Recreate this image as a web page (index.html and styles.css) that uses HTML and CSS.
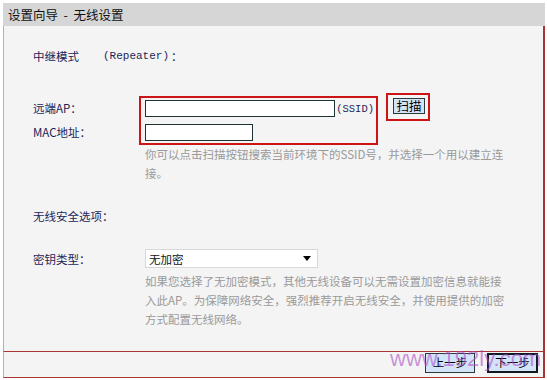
FILE: index.html
```html
<!DOCTYPE html>
<html lang="zh-CN">
<head>
<meta charset="utf-8">
<title>设置向导 - 无线设置</title>
<link rel="stylesheet" href="styles.css">
</head>
<body>
<div class="page">
  <div class="title">设置向导&nbsp;&nbsp;-&nbsp;&nbsp;无线设置</div>
  <div class="content">
    <div class="mode-row">
      <span class="mode-label">中继模式</span><span class="mono">(Repeater)</span><span class="colon">：</span>
    </div>
    <div class="ap-row">
      <div class="ap-labels">
        <div class="label">远端AP：</div>
        <div class="label">MAC地址：</div>
      </div>
      <div class="redbox">
        <div class="input-line">
          <input class="field field-ssid" type="text">
          <span class="ssid">(SSID)</span>
        </div>
        <div class="input-line">
          <input class="field field-mac" type="text">
        </div>
      </div>
      <div class="scanbox">
        <button class="btn scan">扫描</button>
      </div>
    </div>
    <div class="hint">你可以点击扫描按钮搜索当前环境下的SSID号，并选择一个用以建立连<br>接。</div>
    <div class="label section">无线安全选项：</div>
    <div class="key-row">
      <div class="label key-label">密钥类型：</div>
      <div class="select">
        <span>无加密</span>
        <svg class="arrow" width="8" height="5" viewBox="0 0 8 5"><path d="M0 0H8L4 5Z" fill="#000"/></svg>
      </div>
    </div>
    <div class="hint hint2">如果您选择了无加密模式，其他无线设备可以无需设置加密信息就能接<br>入此AP。为保障网络安全，强烈推荐开启无线安全，并使用提供的加密<br>方式配置无线网络。</div>
  </div>
  <div class="footer">
    <button class="btn nav">上一步</button>
    <button class="btn nav next">下一步</button>
    <div class="watermark">www.192ly.com</div>
  </div>
</div>
</body>
</html>
```
FILE: styles.css
```css
html, body {
  margin: 0;
  padding: 0;
  background: #ffffff;
}
body {
  font-family: "Noto Sans CJK SC", "Noto Sans", sans-serif;
  font-size: 11.5px;
}
.page {
  margin: 3px 0 0 3px;
  width: 542px;
}
.title {
  height: 23px;
  line-height: 23px;
  background: #d6d6d6;
  padding-left: 5px;
  font-size: 12.5px;
  color: #111;
}
.content {
  box-sizing: border-box;
  height: 326px;
  background: #f4f4f4;
  border-left: 1px solid #d4a4a4;
  border-right: 2px solid #a83434;
  border-bottom: 1px solid #a83434;
  padding-left: 29px;
  padding-top: 21px;
}
.label, .mode-label {
  color: #1c1f58;
  line-height: 18px;
}
.mode-row {
  display: flex;
  align-items: center;
  height: 18px;
  color: #1c1f58;
}
.mode-label {
  width: 70px;
}
.mono {
  font-family: "Liberation Mono", monospace;
  font-size: 11px;
}
.colon {
  margin-left: 2px;
}
.ap-row {
  display: flex;
  align-items: flex-start;
  margin-top: 28px;
}
.ap-labels {
  width: 106px;
  padding-top: 6px;
  display: flex;
  flex-direction: column;
  gap: 6px;
}
.redbox {
  box-sizing: border-box;
  width: 239px;
  height: 49px;
  margin-top: 3px;
  border: 2px solid #cc1414;
  padding: 2px 2px 2px 4px;
  display: flex;
  flex-direction: column;
  gap: 7px;
}
.input-line {
  display: flex;
  align-items: center;
  height: 17px;
}
.field {
  box-sizing: border-box;
  height: 17px;
  border: 1px solid #1e3434;
  background: #fff;
  margin: 0;
  padding: 0 2px;
}
.field-ssid { width: 194px; }
.field-mac { width: 108px; }
.ssid {
  font-family: "Liberation Mono", monospace;
  font-size: 10.5px;
  color: #1c1f58;
  margin-left: 1px;
}
.scanbox {
  box-sizing: border-box;
  width: 44px;
  height: 28px;
  margin-left: 8px;
  border: 2px solid #cc1414;
  padding: 3px 0 0 5px;
}
.btn {
  box-sizing: border-box;
  margin: 0;
  padding: 0;
  font-family: "Noto Sans CJK SC", sans-serif;
  color: #000;
  background: #d4e4f8;
  border: 1px solid #2a3a3a;
  line-height: 1;
}
.scan {
  width: 32px;
  height: 16px;
  font-size: 12.5px;
}
.hint {
  margin-left: 112px;
  color: #9a9a9a;
  line-height: 19px;
}
.section {
  margin-top: 24px;
}
.key-row {
  display: flex;
  align-items: center;
  margin-top: 24px;
}
.key-label {
  width: 112px;
}
.select {
  box-sizing: border-box;
  width: 173px;
  height: 19px;
  background: #fff;
  border: 1px solid #d8d8d8;
  display: flex;
  align-items: center;
  justify-content: space-between;
  padding: 0 6px 0 3px;
  color: #111;
}
.hint2 {
  margin-top: 4px;
}
.footer {
  position: relative;
  box-sizing: border-box;
  height: 26px;
  background: #f4f4f4;
  border-left: 1px solid #d4a4a4;
  border-right: 2px solid #a83434;
  border-bottom: 1px solid #a83434;
  display: flex;
  justify-content: flex-end;
  align-items: flex-start;
  gap: 12px;
  padding: 1px 5px 0 0;
}
.nav {
  width: 50px;
  height: 20px;
  font-size: 11.5px;
}
.next {
  width: 51px;
  border: 2px solid #101820;
}
.watermark {
  position: absolute;
  left: 386px;
  top: -6px;
  font-family: "Liberation Sans", Arial, sans-serif;
  font-size: 22px;
  color: rgba(170, 80, 200, 0.6);
  white-space: nowrap;
  pointer-events: none;
}
```
